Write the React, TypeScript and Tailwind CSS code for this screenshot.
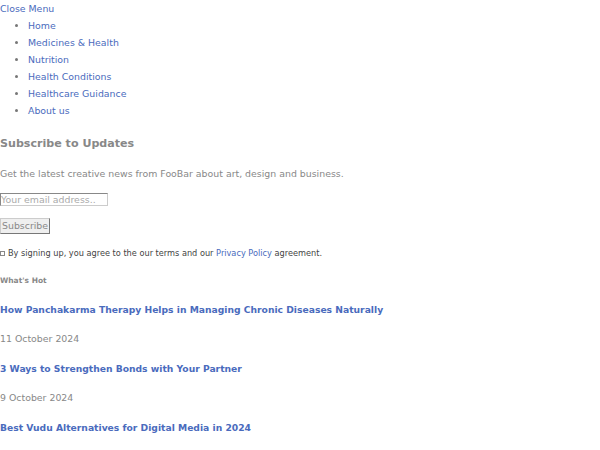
export default function App() {
  const items = ["Home", "Medicines & Health", "Nutrition", "Health Conditions", "Healthcare Guidance", "About us"];
  const posts = [
    { t: "How Panchakarma Therapy Helps in Managing Chronic Diseases Naturally", d: "11 October 2024" },
    { t: "3 Ways to Strengthen Bonds with Your Partner", d: "9 October 2024" },
    { t: "Best Vudu Alternatives for Digital Media in 2024", d: "" },
  ];
  return (
    <div className="w-[600px] h-[450px] overflow-hidden bg-white text-[9.4px] leading-[17px] text-[#888]" style={{ fontFamily: '"DejaVu Sans", sans-serif' }}>
      <div className="text-[#4a6bbd]">Close Menu</div>
      <ul className="list-disc pl-[28px] marker:text-[#777]">
        {items.map((i) => (
          <li key={i} className="text-[#4a6bbd]">{i}</li>
        ))}
      </ul>
      <h3 className="mt-[16px] text-[11.1px] font-bold text-[#888] leading-[17px]">Subscribe to Updates</h3>
      <p className="mt-[13px]">Get the latest creative news from FooBar about art, design and business.</p>
      <input className="mt-[11px] block w-[108px] h-[13px] border border-[#ccc] border-t-[#888] border-l-[#888] text-[9.4px] px-0 placeholder:text-[#aaa]" placeholder="Your email address.." />
      <button className="mt-[12px] block border border-[#ccc] border-r-[#777] border-b-[#777] bg-[#efefef] px-[1px] h-[16px] leading-[14px] text-[#888]">Subscribe</button>
      <div className="mt-[11px] flex items-center text-[#444] text-[8.2px]">
        <span className="inline-block w-[5px] h-[5px] border border-[#888] mr-[3px]"></span>
        <span>By signing up, you agree to the our terms and our <span className="text-[#4a6bbd]">Privacy Policy</span> agreement.</span>
      </div>
      <div className="mt-[10px] text-[7.5px] font-bold text-[#888]">What's Hot</div>
      {posts.map((p, idx) => (
        <div key={p.t}>
          <div className={`${idx === 0 ? "mt-[12px]" : "mt-[13px]"} text-[9.2px] font-bold text-[#4a6bbd]`}>{p.t}</div>
          {p.d && <div className="mt-[12px]">{p.d}</div>}
        </div>
      ))}
    </div>
  );
}
